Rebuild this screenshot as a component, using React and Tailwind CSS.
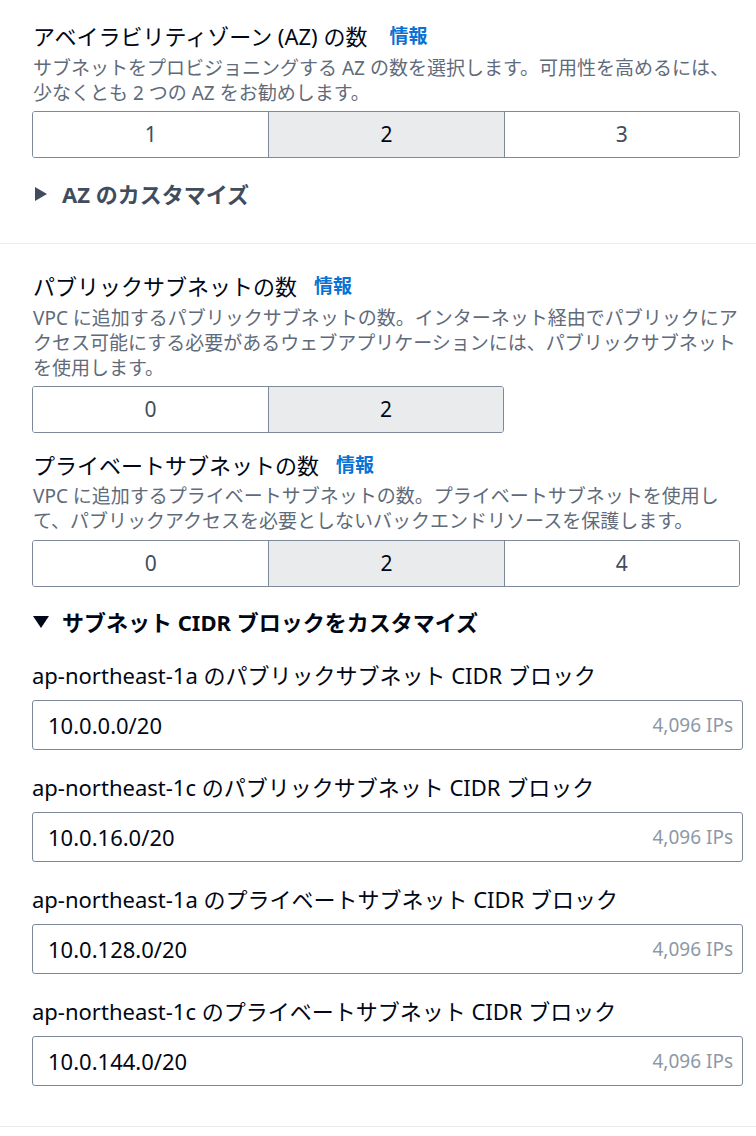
import React from "react";

const font = { fontFamily: '"Noto Sans", "Noto Sans CJK JP", sans-serif' };

function Title({ children, gap = "ml-[17px]" }) {
  return (
    <div className="flex items-center h-[28px] leading-[28px] text-[22px] text-[#000716] whitespace-nowrap">
      <span>{children}</span>
      <span className={gap + " text-[19px] font-bold text-[#0972d3]"}>情報</span>
    </div>
  );
}

function Desc({ children, className = "" }) {
  return (
    <div className={"text-[19px] leading-[25px] text-[#5f6b7a] whitespace-nowrap " + className}>{children}</div>
  );
}

function Segmented({ items, selected, className = "" }) {
  return (
    <div className={"flex h-[47px] border border-[#7d8998] rounded-[3px] overflow-hidden " + className}>
      {items.map((it, i) => (
        <div
          key={i}
          className={
            "w-[236px] flex items-center justify-center text-[21px] " +
            (i > 0 ? "border-l border-[#7d8998] " : "") +
            (it === selected ? "bg-[#e9ebed] text-[#000716]" : "bg-white text-[#414d5c]")
          }
        >
          {it}
        </div>
      ))}
    </div>
  );
}

function Expander({ open, children, className = "" }) {
  return (
    <div className={"flex items-center h-[28px] text-[22px] font-bold whitespace-nowrap " + (open ? "text-[#000716] " : "text-[#414d5c] ") + className}>
      <span className="w-[30px] flex items-center">
        {open ? (
          <svg width="16" height="12" viewBox="0 0 16 12" className="ml-[1px]">
            <polygon points="0,0 16,0 8,12" fill="#000716" />
          </svg>
        ) : (
          <svg width="12" height="14" viewBox="0 0 12 14" className="ml-[3px]">
            <polygon points="0,0 12,7 0,14" fill="#414d5c" />
          </svg>
        )}
      </span>
      <span>{children}</span>
    </div>
  );
}

function CidrField({ label, value, className = "" }) {
  return (
    <div className={className}>
      <div className="h-[28px] leading-[28px] text-[22px] text-[#000716] whitespace-nowrap">{label}</div>
      <div className="mt-[11px] w-[711px] h-[50px] border border-[#7d8998] rounded-[3px] flex items-center justify-between pl-[15px] pr-[9px]">
        <span className="text-[22px] text-[#000716]">{value}</span>
        <span className="text-[19px] text-[#8d99a8]">4,096 IPs</span>
      </div>
    </div>
  );
}

export default function App() {
  return (
    <div className="w-[756px] h-[1136px] bg-white overflow-hidden" style={font}>
      <div className="px-[32px] pt-[22px] pb-[35px] border-b border-[#e9ebed]">
        <div className="pl-[1px]">
          <Title gap="ml-[22px]">アベイラビリティゾーン (AZ) の数</Title>
          <Desc className="mt-[6px]">
            サブネットをプロビジョニングする AZ の数を選択します。可用性を高めるには、
            <br />
            少なくとも 2 つの AZ をお勧めします。
          </Desc>
        </div>
        <Segmented items={["1", "2", "3"]} selected="2" className="mt-[5px] w-[708px]" />
        <Expander className="mt-[22px]">AZ のカスタマイズ</Expander>
      </div>

      <div className="px-[32px] pt-[28px] pb-[40px] border-b border-[#e9ebed]">
        <div className="pl-[1px]">
          <Title>パブリックサブネットの数</Title>
          <Desc className="mt-[6px]">
            VPC に追加するパブリックサブネットの数。インターネット経由でパブリックにア
            <br />
            クセス可能にする必要があるウェブアプリケーションには、パブリックサブネット
            <br />
            を使用します。
          </Desc>
        </div>
        <Segmented items={["0", "2"]} selected="2" className="mt-[5px] w-[472px]" />

        <div className="pl-[1px] mt-[18px]">
          <Title>プライベートサブネットの数</Title>
          <Desc className="mt-[5px]">
            VPC に追加するプライベートサブネットの数。プライベートサブネットを使用し
            <br />
            て、パブリックアクセスを必要としないバックエンドリソースを保護します。
          </Desc>
        </div>
        <Segmented items={["0", "2", "4"]} selected="2" className="mt-[6px] w-[708px]" />

        <Expander open className="mt-[21px]">サブネット CIDR ブロックをカスタマイズ</Expander>

        <CidrField className="mt-[25px]" label="ap-northeast-1a のパブリックサブネット CIDR ブロック" value="10.0.0.0/20" />
        <CidrField className="mt-[23px]" label="ap-northeast-1c のパブリックサブネット CIDR ブロック" value="10.0.16.0/20" />
        <CidrField className="mt-[23px]" label="ap-northeast-1a のプライベートサブネット CIDR ブロック" value="10.0.128.0/20" />
        <CidrField className="mt-[23px]" label="ap-northeast-1c のプライベートサブネット CIDR ブロック" value="10.0.144.0/20" />
      </div>
    </div>
  );
}
